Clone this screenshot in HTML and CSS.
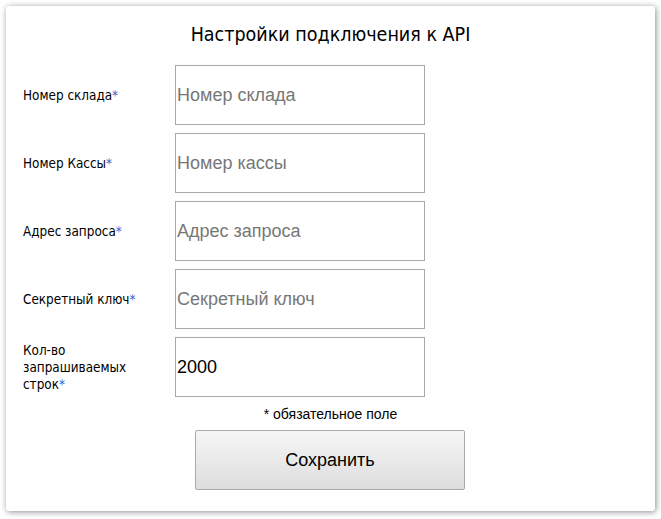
FILE: index.html
```html
<!DOCTYPE html>
<html lang="ru">
<head>
    <meta charset="UTF-8">
    <meta name="viewport" content="width=device-width, initial-scale=1.0">
    <title>Настройки подключения к API</title>
    <link rel="stylesheet" href="styles.css">
</head>
<body>
    <div class="panel">
        <h1 class="title">Настройки подключения к API</h1>
        <form class="settings">
            <div class="row">
                <label class="label">Номер склада<span class="req">*</span></label>
                <input class="field" type="text" placeholder="Номер склада">
            </div>
            <div class="row">
                <label class="label">Номер Кассы<span class="req">*</span></label>
                <input class="field" type="text" placeholder="Номер кассы">
            </div>
            <div class="row">
                <label class="label">Адрес запроса<span class="req">*</span></label>
                <input class="field" type="text" placeholder="Адрес запроса">
            </div>
            <div class="row">
                <label class="label">Секретный ключ<span class="req">*</span></label>
                <input class="field" type="text" placeholder="Секретный ключ">
            </div>
            <div class="row">
                <label class="label narrow">Кол-во запрашиваемых строк<span class="req">*</span></label>
                <input class="field" type="text" value="2000">
            </div>
            <div class="note">* обязательное поле</div>
            <div class="actions">
                <button class="save" type="button">Сохранить</button>
            </div>
        </form>
    </div>
</body>
</html>
```

FILE: styles.css
```css
* {
    margin: 0;
    padding: 0;
    box-sizing: border-box;
}

body {
    background: #ffffff;
    padding: 6px;
    font-family: "DejaVu Sans Condensed", "DejaVu Sans", sans-serif;
}

.panel {
    width: 649px;
    height: 505px;
    background: #fff;
    border-radius: 3px;
    box-shadow: 1px 1px 6px rgba(0, 0, 0, 0.45);
    padding: 17px 0 0 17px;
}

.title {
    font-size: 19.5px;
    font-weight: normal;
    text-align: center;
    color: #000;
    line-height: 24px;
    padding-right: 17px;
    margin-bottom: 18px;
}

.settings {
    display: flex;
    flex-direction: column;
    gap: 8px;
}

.row {
    display: flex;
    align-items: center;
}

.label {
    width: 152px;
    font-size: 13.4px;
    line-height: 17px;
    color: #000;
}

.label.narrow {
    padding-right: 40px;
}

.req {
    color: #3366cc;
}

.field {
    width: 250px;
    height: 60px;
    border: 1px solid #a9a9a9;
    padding: 0 1px;
    font-family: "Liberation Sans", Arial, sans-serif;
    font-size: 18px;
    color: #000;
    outline: none;
}

.field::placeholder {
    color: #777;
}

.note {
    font-family: "Liberation Sans", Arial, sans-serif;
    font-size: 14px;
    color: #000;
    text-align: center;
    padding-right: 17px;
    line-height: 18px;
}

.actions {
    display: flex;
    justify-content: center;
    padding-right: 18px;
    margin-top: -1px;
}

.save {
    width: 270px;
    height: 60px;
    border: 1px solid #a9a9a9;
    border-radius: 2px;
    background: linear-gradient(#f6f6f6, #dddddd);
    font-family: "Liberation Sans", Arial, sans-serif;
    font-size: 18px;
    color: #000;
    cursor: pointer;
}
```
